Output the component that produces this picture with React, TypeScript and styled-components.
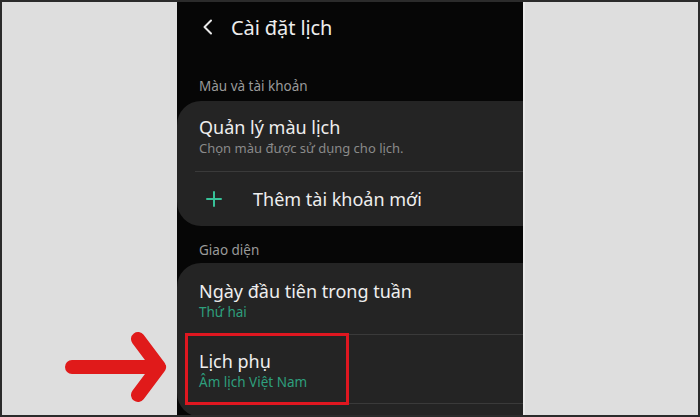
import React from "react";
import styled, { createGlobalStyle } from "styled-components";

const Global = createGlobalStyle`
  html, body { margin: 0; padding: 0; background: #dedede; }
  * { box-sizing: border-box; }
`;

const Frame = styled.div`
  width: 700px;
  height: 417px;
  border: 2px solid #2b2b2b;
  background: #dedede;
  display: grid;
  grid-template-columns: 175px 346px 1fr;
  overflow: hidden;
  font-family: "Noto Sans", "Open Sans", sans-serif;
`;

const Side = styled.div`
  display: flex;
  align-items: flex-start;
  padding: 328px 0 0 56px;
`;

const RightSide = styled.div`
  border-left: 2px solid #e9e9e9;
  background: #dedede;
`;

const Screen = styled.div`
  background: #060606;
  display: flex;
  flex-direction: column;
  overflow: hidden;
  margin: -2px 0;
  & > * { flex-shrink: 0; }
`;

const Header = styled.div`
  height: 54px;
  display: flex;
  align-items: center;
  padding-left: 25px;
  gap: 17px;
`;

const Title = styled.div`
  color: #ededed;
  font-size: 20px;
  letter-spacing: -0.1px;
`;

const SectionLabel = styled.div<{ $pt: number; $pb: number }>`
  color: #9a9a9a;
  font-size: 13.5px;
  line-height: 18px;
  padding: ${(p) => p.$pt}px 22px ${(p) => p.$pb}px;
`;

const Card = styled.div<{ $fill?: boolean }>`
  background: #242424;
  border-radius: 24px 0 0 24px;
  display: flex;
  flex-direction: column;
  flex-grow: ${(p) => (p.$fill ? 1 : 0)};
`;

const Row = styled.div<{ $pt: number; $pb: number }>`
  position: relative;
  padding: ${(p) => p.$pt}px 22px ${(p) => p.$pb}px;
`;

const ActionRow = styled.div`
  height: 54px;
  display: flex;
  align-items: center;
  padding-left: 29px;
  gap: 31px;
`;

const ItemTitle = styled.div`
  color: #eeeeee;
  font-size: 18px;
  line-height: 24px;
`;

const ItemSub = styled.div<{ $accent?: boolean }>`
  color: ${(p) => (p.$accent ? "#2e9f7d" : "#8a8a8a")};
  font-size: ${(p) => (p.$accent ? 13.5 : 13)}px;
  line-height: 18px;
`;

const Divider = styled.div`
  height: 1px;
  background: #3a3a3a;
  margin-left: 18px;
`;

const Highlight = styled.div`
  position: absolute;
  left: 8px;
  top: -2px;
  width: 164px;
  height: 72px;
  border: 3px solid #df1720;
`;

const Back = () => (
  <svg width="12" height="16" viewBox="0 0 12 16">
    <path d="M9 1.5 L2.5 8 L9 14.5" fill="none" stroke="#e8e8e8" strokeWidth="2" strokeLinecap="round" strokeLinejoin="round" />
  </svg>
);

const Plus = () => (
  <svg width="16" height="16" viewBox="0 0 16 16">
    <path d="M8 1 V15 M1 8 H15" stroke="#37c198" strokeWidth="2" strokeLinecap="round" />
  </svg>
);

const Arrow = () => (
  <svg width="116" height="74" viewBox="0 0 116 74">
    <path d="M14 37 H101 M80 9 L101 37 L80 65" fill="none" stroke="#e01a1a" strokeWidth="14" strokeLinecap="round" strokeLinejoin="round" />
  </svg>
);

export default function App() {
  return (
    <>
      <Global />
      <Frame>
        <Side>
          <Arrow />
        </Side>
        <Screen>
          <Header>
            <Back />
            <Title>Cài đặt lịch</Title>
          </Header>
          <SectionLabel $pt={23} $pb={6}>Màu và tài khoản</SectionLabel>
          <Card>
            <Row $pt={14} $pb={14}>
              <ItemTitle>Quản lý màu lịch</ItemTitle>
              <ItemSub>Chọn màu được sử dụng cho lịch.</ItemSub>
            </Row>
            <Divider />
            <ActionRow>
              <Plus />
              <ItemTitle>Thêm tài khoản mới</ItemTitle>
            </ActionRow>
          </Card>
          <SectionLabel $pt={15} $pb={4}>Giao diện</SectionLabel>
          <Card $fill>
            <Row $pt={16} $pb={13}>
              <ItemTitle>Ngày đầu tiên trong tuần</ItemTitle>
              <ItemSub $accent>Thứ hai</ItemSub>
            </Row>
            <Divider />
            <Row $pt={14} $pb={12}>
              <Highlight />
              <ItemTitle>Lịch phụ</ItemTitle>
              <ItemSub $accent>Âm lịch Việt Nam</ItemSub>
            </Row>
            <Divider />
          </Card>
        </Screen>
        <RightSide />
      </Frame>
    </>
  );
}
